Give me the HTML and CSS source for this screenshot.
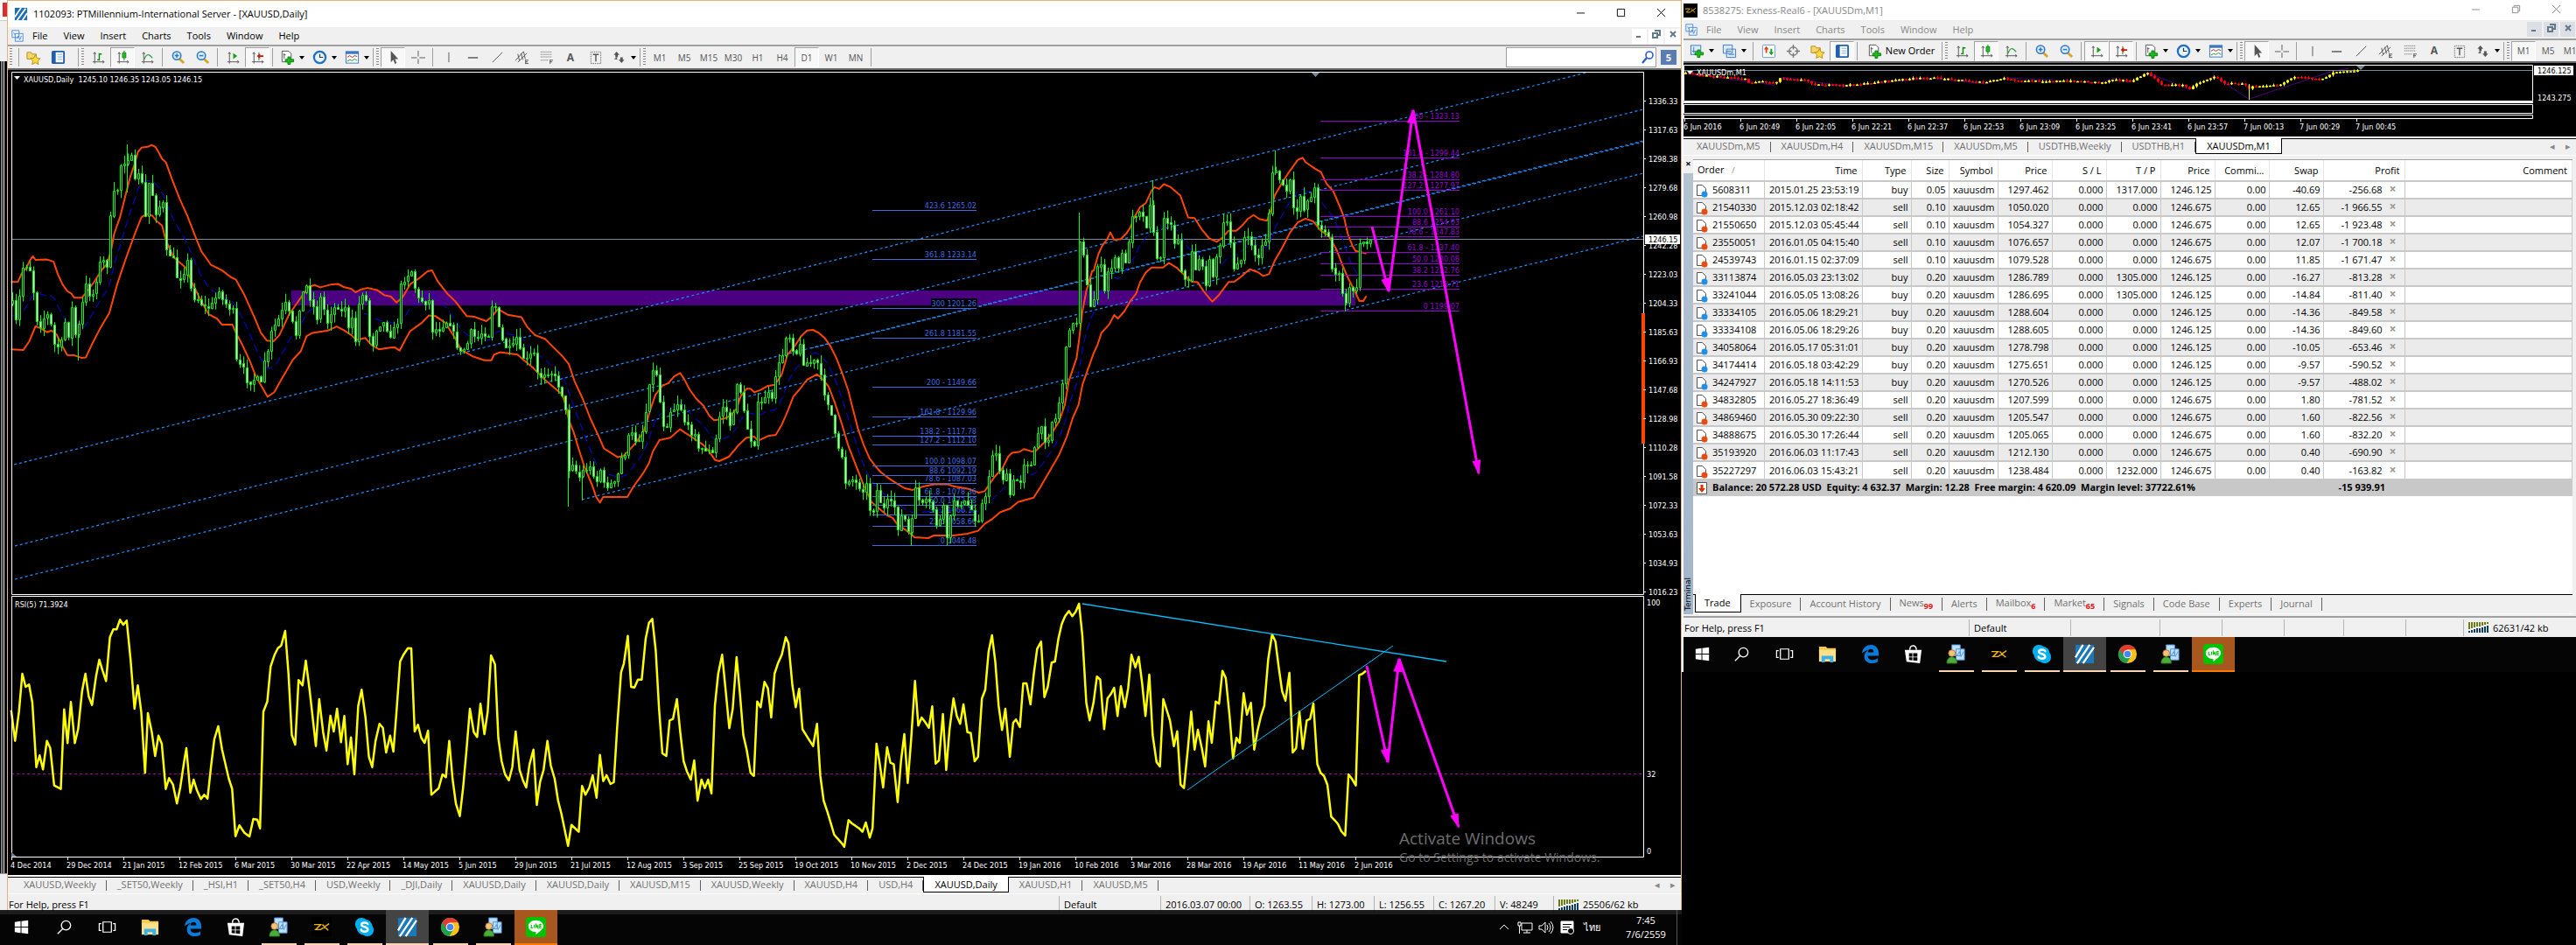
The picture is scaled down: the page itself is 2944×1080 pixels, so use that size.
FILE: index.html
```html
<!DOCTYPE html>
<html lang="en">
<head>
<meta charset="utf-8">
<title>MetaTrader workspace</title>
<link rel="stylesheet" href="styles.css">
</head>
<body>
<svg class="sprite" aria-hidden="true">
  <symbol id="i-app" viewBox="0 0 18 18"><path fill="#1d6fb0" d="M1 1h16v16H1z"/><path stroke="#fff" stroke-width="2" d="M1 13 9 1M4 17 15 2M11 17l6-9"/></symbol>
  <symbol id="i-doc" viewBox="0 0 18 18"><g fill="#eaf2fc" stroke="#4a86d0"><path d="M2 2h9v9H2zM6 6h10v10H6z"/><path fill="none" d="M8 13l2-4 2 5 2-5M4 5l2 3"/></g></symbol>
  <symbol id="i-star" viewBox="0 0 18 18"><path fill="#f5d76a" stroke="#b98d1b" d="M1 3h5l1 2h5v6H1z"/><path fill="#ffd83a" stroke="#b98d1b" d="m11 6 2 4 4 .5-3 3 .7 4L11 15.500l-4 2 1-4-3-3 4-.5z"/></symbol>
  <symbol id="i-nav" viewBox="0 0 18 18"><rect x="2" y="2" width="14" height="14" rx="1" fill="#fff" stroke="#1f5fae" stroke-width="2"/><path fill="#1f5fae" d="M2 2h4v14H2z"/><path stroke="#7da7dd" d="M8 5.500h6M8 8.500h6M8 11.500h6"/></symbol>
  <symbol id="i-bars" viewBox="0 0 18 18"><path fill="none" stroke="#555" d="M4.500 3v13.500M2 14.500h14M3 5l1.500-2L6 5M14 13l2 1.500-2 1.500"/><path stroke="#0a8a0a" stroke-width="1.500" d="M10 4v9M10 5h3M7.500 12H10"/></symbol>
  <symbol id="i-candle" viewBox="0 0 18 18"><path fill="none" stroke="#555" d="M4.500 3v13.500M2 14.500h14M3 5l1.500-2L6 5M14 13l2 1.500-2 1.500"/><path stroke="#0a8a0a" d="M10.500 1v12"/><path fill="#1fc41f" stroke="#0a8a0a" d="M8.500 3.500h4v6h-4z"/></symbol>
  <symbol id="i-line" viewBox="0 0 18 18"><path fill="none" stroke="#555" d="M4.500 3v13.500M2 14.500h14M3 5l1.500-2L6 5M14 13l2 1.500-2 1.500"/><path fill="none" stroke="#2f9a3a" stroke-width="1.300" d="M5 12c2-6 5-9 10-2"/></symbol>
  <symbol id="i-zin" viewBox="0 0 18 18"><path stroke="#d9a520" stroke-width="3" d="m11 11 5 5"/><circle cx="7.500" cy="7" r="5" fill="#d8ecff" stroke="#2f79c4" stroke-width="1.600"/><path stroke="#2f79c4" stroke-width="1.600" d="M5 7h5M7.500 4.500v5"/></symbol>
  <symbol id="i-zout" viewBox="0 0 18 18"><path stroke="#d9a520" stroke-width="3" d="m11 11 5 5"/><circle cx="7.500" cy="7" r="5" fill="#d8ecff" stroke="#2f79c4" stroke-width="1.600"/><path stroke="#2f79c4" stroke-width="1.600" d="M5 7h5"/></symbol>
  <symbol id="i-scroll" viewBox="0 0 18 18"><path fill="none" stroke="#555" d="M4.500 3v13.500M2 14.500h14M3 5l1.500-2L6 5M14 13l2 1.500-2 1.500"/><path fill="#18a018" d="m9 4 5 3.500L9 11z"/></symbol>
  <symbol id="i-shift" viewBox="0 0 18 18"><path fill="none" stroke="#555" d="M4.500 3v13.500M2 14.500h14M3 5l1.500-2L6 5M14 13l2 1.500-2 1.500M10.500 3v10"/><path fill="#c01c00" d="m8 7.500 4-3v2h4v2h-4v2z"/></symbol>
  <symbol id="i-ind" viewBox="0 0 18 18"><path fill="#fff" stroke="#555" d="M2.500 1.500h8l3 3v10h-11z"/><path stroke="#555" d="M5 11V4M4 6h3"/><path fill="#18c018" stroke="#0a800a" d="M9.500 8.500h3v3h4v3h-4v3h-3v-3h-3v-3h3z"/></symbol>
  <symbol id="i-clock" viewBox="0 0 18 18"><circle cx="9" cy="9" r="7" fill="#eaf4ff" stroke="#1f6fc8" stroke-width="2.400"/><path fill="none" stroke="#333" stroke-width="1.300" d="M9 5v4h4"/></symbol>
  <symbol id="i-tpl" viewBox="0 0 18 18"><rect x="1.500" y="2" width="15" height="14" fill="#fff" stroke="#3b78c0"/><path fill="#3b78c0" d="M1 2h16v3H1z"/><path fill="none" stroke="#a02020" d="m3 9 3-2 3 2 3-2 3 1"/><path fill="none" stroke="#209020" d="m3 14 3-2 3 1 3-2 3 2"/></symbol>
  <symbol id="i-cursor" viewBox="0 0 18 18"><path fill="#555" d="M6 1v14l3-3 2 5 2-1-2-5h4z"/></symbol>
  <symbol id="i-cross" viewBox="0 0 18 18"><path stroke="#555" d="M9.500 1v7M9.500 11v6M1 9.500h7M11 9.500h7"/></symbol>
  <symbol id="i-vl" viewBox="0 0 18 18"><path stroke="#555" d="M9.500 3v12"/></symbol>
  <symbol id="i-hl" viewBox="0 0 18 18"><path stroke="#555" stroke-width="1.500" d="M3 9.500h12"/></symbol>
  <symbol id="i-tl" viewBox="0 0 18 18"><path stroke="#555" d="M3 15 15 3"/></symbol>
  <symbol id="i-ch" viewBox="0 0 18 18"><path fill="none" stroke="#555" d="M1 13 11 2M4 15 15 4M4 5l2 8M8 4l2 8M11 2l2 9M13.500 12v5M13 12.500h4M13 14.500h3M13 16.500h4"/></symbol>
  <symbol id="i-fib" viewBox="0 0 18 18"><path stroke="#555" stroke-dasharray="1 1" d="M2 2.500h14M2 5.500h14M2 8.500h14M2 12.500h9"/><path fill="none" stroke="#555" d="M13.500 17v-5M13 12.500h4M13 14.500h3"/></symbol>
  <symbol id="i-lbl" viewBox="0 0 18 18"><path fill="none" stroke="#555" stroke-dasharray="1 1" d="M3.500 2.500h12v14h-12z"/><path stroke="#555" stroke-width="1.500" d="M6 5.500h7M9.500 6v8"/></symbol>
  <symbol id="i-arr" viewBox="0 0 18 18"><path fill="#555" d="m6 2 3.500 4H7.500v3h-3V6H2.500zM12 16 8.500 12h2V9h3v3h2zM3 11l3-2 1 3z"/></symbol>
  <symbol id="i-new" viewBox="0 0 18 18"><rect x="1.500" y="2" width="12" height="11" fill="#dcebfb" stroke="#3b78c0"/><path stroke="#3b78c0" d="M5 4v7M3 9h9"/><path fill="#18c018" stroke="#0a800a" d="M9.500 7.500h3v3h4v3h-4v3h-3v-3h-3v-3h3z"/></symbol>
  <symbol id="i-prof" viewBox="0 0 18 18"><path fill="#dcebfb" stroke="#3b78c0" d="M1.500 1.500h11v10h-11zM5.500 6.500h11v10h-11z"/><path stroke="#3b78c0" d="M5 9h6M8 13h7"/></symbol>
  <symbol id="i-mw" viewBox="0 0 18 18"><rect x="1.500" y="1.500" width="15" height="15" rx="1" fill="#fff" stroke="#6b9bd0"/><path fill="#18a018" d="m12 14-3-4h2V6h2v4h2z"/><path fill="#e04010" d="m6 3 3 4H7v4H5V7H3z"/></symbol>
  <symbol id="i-tgt" viewBox="0 0 18 18"><circle cx="9" cy="9" r="5" fill="none" stroke="#777" stroke-width="1.500"/><path stroke="#777" stroke-width="1.500" d="M9 1v6M9 11v6M1 9h6M11 9h6"/></symbol>
  <symbol id="i-conn" viewBox="0 0 24 12"><path fill="#6b7d14" d="M0 0h2v8H0zM3 0h2v7H3zM6 0h2v6H6zM9 0h2v5H9zM12 0h2v5h-2zM15 0h2v4h-2zM18 0h2v3h-2zM21 0h2v2h-2z"/><path fill="#0f3d5e" d="M0 10h2v2H0zM3 9h2v3H3zM6 8h2v4H6zM9 7h2v5H9zM12 7h2v5h-2zM15 6h2v6h-2zM18 5h2v7h-2zM21 4h2v8h-2z"/></symbol>
  <symbol id="i-mag" viewBox="0 0 18 18"><circle cx="11" cy="6" r="4" fill="none" stroke="#2a5fc0" stroke-width="1.600"/><path stroke="#2a5fc0" stroke-width="2.200" d="m8 9-5 6"/></symbol>
  <symbol id="t-win" viewBox="0 0 24 24"><path fill="#fff" d="M4 6l7-1v6.500H4zM12 5l8-1v7.500h-8zM4 12.500h7V19l-7-1zM12 12.500h8V20l-8-1z"/></symbol>
  <symbol id="t-find" viewBox="0 0 24 24"><circle cx="14" cy="10" r="5.500" fill="none" stroke="#fff" stroke-width="1.400"/><path stroke="#fff" stroke-width="1.400" d="m10 14-6 6"/></symbol>
  <symbol id="t-task" viewBox="0 0 24 24"><path fill="none" stroke="#fff" stroke-width="1.300" d="M7 6h10v12H7zM5 8H2.500v8H5M19 8h2.500v8H19"/></symbol>
  <symbol id="t-dir" viewBox="0 0 24 24"><path fill="#f6c944" d="M2 3h8l2 2h10v4H2z"/><path fill="#fde18a" d="M2 7h20v14H2z"/><path fill="#3ab0ec" d="M5 14h14v8h-4v-4H9v4H5z"/></symbol>
  <symbol id="t-edge" viewBox="0 0 24 24"><path fill="#0b7ad8" d="M2 11C3 4 8 1 13 1c6 0 9 5 9 10v3H9c0 4 3 5 6 5 2 0 4-.5 6-2v4c-2 1.500-5 2-7 2-6 0-10-4-9-10 .6-3 3-5 5-6-3 .5-6 2-8 4zm7-1h7c0-3-1.500-4-3.500-4S9.500 7.500 9 10z"/></symbol>
  <symbol id="t-store" viewBox="0 0 24 24"><path fill="none" stroke="#fff" stroke-width="1.500" d="M8 7c0-6 7-7 8 0"/><path fill="#fff" d="M2 7h20l-2 16-16-2z"/><path fill="#000" d="M7 11h4v4H7zM12 11h5v4h-5zM7 16h4v3.500l-4-.5zM12 16h5v4l-5-.5z"/></symbol>
  <symbol id="t-mt" viewBox="0 0 24 24"><path fill="#bfe0fb" stroke="#4a90d8" d="M7 1h10v13H7zM12 6h10v13H12z"/><path fill="none" stroke="#4a90d8" d="M13 14l3-5 2 6 3-6"/><circle cx="7" cy="11" r="4" fill="#f3c27a" stroke="#b9702a"/><path fill="#4cae3a" stroke="#2c7a1d" d="M1 23c0-10 12-10 12 0z"/></symbol>
  <symbol id="t-zx" viewBox="0 0 24 24"><path fill="#000" d="M0 0h24v24H0z"/><path fill="none" stroke="#f0b400" stroke-width="1.500" d="M3 9h8l-6 6h6L21 8M13 9l7 7"/></symbol>
  <symbol id="t-skype" viewBox="0 0 24 24"><rect x="1" y="1" width="15" height="15" rx="7" fill="#00aff0"/><rect x="8" y="8" width="15" height="15" rx="7" fill="#00aff0"/><circle cx="12" cy="12" r="9.500" fill="#00aff0"/><path fill="none" stroke="#fff" stroke-width="2.600" stroke-linecap="round" d="M16 8.500C15 6 8.500 6 8.500 9c0 3.500 7.500 2 7.500 6 0 3.500-7.500 3-8 0"/></symbol>
  <symbol id="t-app" viewBox="0 0 24 24"><path fill="#1d78b8" d="M1 1h22v22H1z"/><path stroke="#fff" stroke-width="2.400" d="M1 16 10 1M3 23 18 1M10 23 23 4"/></symbol>
  <symbol id="t-chrome" viewBox="0 0 24 24"><circle cx="12" cy="12" r="11" fill="#fbc116"/><path fill="#e33b2e" d="M2.500 6.500A11 11 0 0 1 21.500 6.500H12L7 15z"/><path fill="#1da050" d="M2.500 6.500A11 11 0 0 0 11 23l5-8.500H8z"/><circle cx="12" cy="12" r="5" fill="#fff"/><circle cx="12" cy="12" r="4" fill="#4688f1"/></symbol>
  <symbol id="t-line" viewBox="0 0 24 24"><rect width="24" height="24" rx="4" fill="#00c300"/><path fill="#fff" d="M12 4c5 0 9 3 9 7 0 3-4 6-9 10v-3c-5 0-9-3-9-7s4-7 9-7z"/><path fill="none" stroke="#00c300" stroke-width="1.200" d="M6.500 9v4h2M10 9v4M12 13V9l2.500 4V9M18.500 9h-2v4h2M16.500 11h2"/></symbol>
</svg>

<main class="screens">
<section class="screen">
  <div class="behind"><i class="b-red"></i><i class="b-tool"></i><i class="b-chart"></i><i class="b-foot"></i></div>
  <div class="window first">
    <header class="title">
      <svg class="ic"><use href="#i-app"/></svg><h1>1102093: PTMillennium-International Server - [XAUUSD,Daily]</h1>
      <span class="caps"><button aria-label="Minimize"><svg viewBox="0 0 12 12"><path d="M1 6.500h10"/></svg></button><button aria-label="Maximize"><svg viewBox="0 0 12 12"><path d="M1.500 1.500h9v9h-9z"/></svg></button><button aria-label="Close"><svg viewBox="0 0 12 12"><path d="m1 1 10 10M11 1 1 11"/></svg></button></span>
    </header>
    <nav class="menu"><svg class="ic"><use href="#i-doc"/></svg><button>File</button><button>View</button><button>Insert</button><button>Charts</button><button>Tools</button><button>Window</button><button>Help</button>
      <span class="mdi"><button aria-label="Minimize chart"><svg viewBox="0 0 12 12"><path d="M2 9h5"/></svg></button><button aria-label="Restore chart"><svg viewBox="0 0 12 12"><path d="M4 2h6v5H8M2 5h5v5H2z"/></svg></button><button aria-label="Close chart"><svg viewBox="0 0 12 12"><path d="m3 3 6 6M9 3 3 9"/></svg></button></span></nav>
    <div class="tools">
      <i class="gsep"></i>
      <button class="b" aria-label="Favorites"><svg><use href="#i-star"/></svg></button><button class="b" aria-label="Navigator"><svg><use href="#i-nav"/></svg></button>
      <i class="gsep wide"></i>
      <button class="b" aria-label="Bars"><svg><use href="#i-bars"/></svg></button><button class="b on" aria-label="Candles"><svg><use href="#i-candle"/></svg></button><button class="b" aria-label="Line"><svg><use href="#i-line"/></svg></button>
      <i class="sep"></i>
      <button class="b" aria-label="Zoom in"><svg><use href="#i-zin"/></svg></button><button class="b" aria-label="Zoom out"><svg><use href="#i-zout"/></svg></button>
      <i class="sep"></i>
      <button class="b" aria-label="Auto scroll"><svg><use href="#i-scroll"/></svg></button><button class="b on" aria-label="Chart shift"><svg><use href="#i-shift"/></svg></button>
      <i class="sep"></i>
      <button class="b drop" aria-label="Indicators"><svg><use href="#i-ind"/></svg></button><button class="b drop" aria-label="Periods"><svg><use href="#i-clock"/></svg></button><button class="b drop" aria-label="Templates"><svg><use href="#i-tpl"/></svg></button>
      <i class="gsep"></i>
      <button class="b on" aria-label="Cursor"><svg><use href="#i-cursor"/></svg></button><button class="b" aria-label="Crosshair"><svg><use href="#i-cross"/></svg></button>
      <i class="sep"></i>
      <button class="b" aria-label="Vertical line"><svg><use href="#i-vl"/></svg></button><button class="b" aria-label="Horizontal line"><svg><use href="#i-hl"/></svg></button><button class="b" aria-label="Trendline"><svg><use href="#i-tl"/></svg></button><button class="b" aria-label="Channel"><svg><use href="#i-ch"/></svg></button><button class="b" aria-label="Fibonacci"><svg><use href="#i-fib"/></svg></button><button class="b big">A</button><button class="b" aria-label="Text label"><svg><use href="#i-lbl"/></svg></button><button class="b drop" aria-label="Arrows"><svg><use href="#i-arr"/></svg></button>
      <i class="gsep"></i>
      <button class="b">M1</button><button class="b">M5</button><button class="b">M15</button><button class="b">M30</button><button class="b">H1</button><button class="b">H4</button><button class="b on">D1</button><button class="b">W1</button><button class="b">MN</button>
      <i class="sep"></i>
      <label class="search"><input type="text" aria-label="Search"><svg><use href="#i-mag"/></svg></label><button class="chat">5</button>
    </div>
    <svg id="daily" class="chart" viewBox="9 80 1912 920" role="img" aria-label="XAUUSD daily chart with RSI"></svg>
    <nav class="tabs"><button>XAUUSD,Weekly</button><button>_SET50,Weekly</button><button>_HSI,H1</button><button>_SET50,H4</button><button>USD,Weekly</button><button>_DJI,Daily</button><button>XAUUSD,Daily</button><button>XAUUSD,Daily</button><button>XAUUSD,M15</button><button>XAUUSD,Weekly</button><button>XAUUSD,H4</button><button>USD,H4</button><button class="cur">XAUUSD,Daily</button><button>XAUUSD,H1</button><button>XAUUSD,M5</button><span class="arrows"><button aria-label="Previous">◂</button><button aria-label="Next">▸</button></span></nav>
    <footer class="status s1"><span>For Help, press F1</span><span>Default</span><span>2016.03.07 00:00</span><span>O: 1263.55</span><span>H: 1273.00</span><span>L: 1256.55</span><span>C: 1267.20</span><span>V: 48249</span><span><svg class="conn"><use href="#i-conn"/></svg>25506/62 kb</span></footer>
  </div>
  <nav class="taskbar">
    <button aria-label="Start"><svg><use href="#t-win"/></svg></button><button aria-label="Search Windows"><svg><use href="#t-find"/></svg></button><button aria-label="Task view"><svg><use href="#t-task"/></svg></button><button aria-label="Explorer"><svg><use href="#t-dir"/></svg></button><button aria-label="Edge"><svg><use href="#t-edge"/></svg></button><button aria-label="Store"><svg><use href="#t-store"/></svg></button><button class="run" aria-label="MetaTrader"><svg><use href="#t-mt"/></svg></button><button class="run" aria-label="Exness"><svg><use href="#t-zx"/></svg></button><button class="run" aria-label="Skype"><svg><use href="#t-skype"/></svg></button><button class="run act" aria-label="PTMillennium"><svg><use href="#t-app"/></svg></button><button class="run" aria-label="Chrome"><svg><use href="#t-chrome"/></svg></button><button class="run" aria-label="MetaTrader 2"><svg><use href="#t-mt"/></svg></button><button class="alert" aria-label="LINE"><svg><use href="#t-line"/></svg></button>
    <div class="tray">
      <svg viewBox="0 0 18 18"><path d="m4 11 5-5 5 5"/></svg>
      <svg viewBox="0 0 18 18"><path d="M5 4h12v8H5zM1 3h3v4H1zM2.500 7v9M7 15h8M11 12v3"/></svg>
      <svg viewBox="0 0 18 18"><path d="M1 7h3l4-4v12l-4-4H1zM10 6q2 3 0 6M12 4q4 5 0 10M14 2q6 7 0 14"/></svg>
      <svg viewBox="0 0 18 18"><path fill="#fff" d="M2 2h14v11h-3v2H2z"/><path stroke="#000" d="M4 5.500h10M4 8.500h8M4 11.500h5"/><circle cx="13" cy="13" r="3.500" fill="#000"/></svg>
      <span class="lang">ไทย</span>
      <time><b>7:45</b><b>7/6/2559</b></time>
    </div>
  </nav>
</section>

<section class="screen second">
  <div class="window idle">
    <header class="title">
      <svg class="ic"><use href="#t-zx"/></svg><h1>8538275: Exness-Real6 - [XAUUSDm,M1]</h1>
      <span class="caps"><button aria-label="Minimize"><svg viewBox="0 0 12 12"><path d="M1 6.500h10"/></svg></button><button aria-label="Restore"><svg viewBox="0 0 12 12"><path d="M3.500 3V1.500h7v7H9M1.500 3.500h7v7h-7z"/></svg></button><button aria-label="Close"><svg viewBox="0 0 12 12"><path d="m1 1 10 10M11 1 1 11"/></svg></button></span>
    </header>
    <nav class="menu"><svg class="ic"><use href="#i-doc"/></svg><button>File</button><button>View</button><button>Insert</button><button>Charts</button><button>Tools</button><button>Window</button><button>Help</button>
      <span class="mdi"><button aria-label="Minimize chart"><svg viewBox="0 0 12 12"><path d="M2 9h5"/></svg></button><button aria-label="Restore chart"><svg viewBox="0 0 12 12"><path d="M4 2h6v5H8M2 5h5v5H2z"/></svg></button><button aria-label="Close chart"><svg viewBox="0 0 12 12"><path d="m3 3 6 6M9 3 3 9"/></svg></button></span></nav>
    <div class="tools">
      <button class="b drop" aria-label="New chart"><svg><use href="#i-new"/></svg></button><button class="b drop" aria-label="Profiles"><svg><use href="#i-prof"/></svg></button>
      <i class="sep"></i>
      <button class="b" aria-label="Market watch"><svg><use href="#i-mw"/></svg></button><button class="b" aria-label="Data window"><svg><use href="#i-tgt"/></svg></button><button class="b" aria-label="Navigator"><svg><use href="#i-star"/></svg></button><button class="b on" aria-label="Terminal"><svg><use href="#i-nav"/></svg></button>
      <i class="sep"></i>
      <button class="b order"><svg><use href="#i-ind"/></svg>New Order</button>
      <i class="gsep"></i>
      <button class="b" aria-label="Bars"><svg><use href="#i-bars"/></svg></button><button class="b on" aria-label="Candles"><svg><use href="#i-candle"/></svg></button><button class="b" aria-label="Line"><svg><use href="#i-line"/></svg></button>
      <i class="sep"></i>
      <button class="b" aria-label="Zoom in"><svg><use href="#i-zin"/></svg></button><button class="b" aria-label="Zoom out"><svg><use href="#i-zout"/></svg></button>
      <i class="sep"></i>
      <button class="b on" aria-label="Auto scroll"><svg><use href="#i-scroll"/></svg></button><button class="b on" aria-label="Chart shift"><svg><use href="#i-shift"/></svg></button>
      <i class="sep"></i>
      <button class="b drop" aria-label="Indicators"><svg><use href="#i-ind"/></svg></button><button class="b drop" aria-label="Periods"><svg><use href="#i-clock"/></svg></button><button class="b drop" aria-label="Templates"><svg><use href="#i-tpl"/></svg></button>
      <i class="gsep"></i>
      <button class="b on" aria-label="Cursor"><svg><use href="#i-cursor"/></svg></button><button class="b" aria-label="Crosshair"><svg><use href="#i-cross"/></svg></button>
      <i class="sep"></i>
      <button class="b" aria-label="Vertical line"><svg><use href="#i-vl"/></svg></button><button class="b" aria-label="Horizontal line"><svg><use href="#i-hl"/></svg></button><button class="b" aria-label="Trendline"><svg><use href="#i-tl"/></svg></button><button class="b" aria-label="Channel"><svg><use href="#i-ch"/></svg></button><button class="b" aria-label="Fibonacci"><svg><use href="#i-fib"/></svg></button><button class="b big">A</button><button class="b" aria-label="Text label"><svg><use href="#i-lbl"/></svg></button><button class="b drop" aria-label="Arrows"><svg><use href="#i-arr"/></svg></button>
      <i class="gsep"></i>
      <button class="b on">M1</button><button class="b">M5</button><button class="b">M15</button>
    </div>
    <svg id="minute" class="chart" viewBox="1924 72 1020 84" role="img" aria-label="XAUUSDm one-minute chart"></svg>
    <nav class="tabs"><button>XAUUSDm,M5</button><button>XAUUSDm,H4</button><button>XAUUSDm,M15</button><button>XAUUSDm,M5</button><button>USDTHB,Weekly</button><button>USDTHB,H1</button><button class="cur">XAUUSDm,M1</button><span class="arrows"><button aria-label="Previous">◂</button><button aria-label="Next">▸</button></span></nav>
    <section class="terminal">
      <div class="side"><button aria-label="Close terminal">×</button><span>Terminal</span></div>
      <div class="pane">
        <table>
          <colgroup><col class="w-order"><col class="w-time"><col class="w-type"><col class="w-size"><col class="w-type"><col class="w-num"><col class="w-num"><col class="w-num"><col class="w-num"><col class="w-num"><col class="w-num"><col class="w-profit"><col></colgroup>
          <thead><tr><th>Order <small>/</small></th><th>Time</th><th>Type</th><th>Size</th><th>Symbol</th><th>Price</th><th>S / L</th><th>T / P</th><th>Price</th><th>Commi...</th><th>Swap</th><th>Profit</th><th>Comment</th></tr></thead>
          <tbody id="orders"></tbody>
          <tfoot><tr><td colspan="11"><svg viewBox="0 0 14 16"><path fill="#fff" stroke="#555" d="M1.500 1.500h11v13h-11z"/><path fill="#e03000" d="m7 13-4-5h2.500V4h3v4H11z"/></svg>Balance: 20 572.28 USD&nbsp; Equity: 4 632.37&nbsp; Margin: 12.28&nbsp; Free margin: 4 620.09&nbsp; Margin level: 37722.61%</td><td class="total">-15 939.91</td><td></td></tr></tfoot>
        </table>
        <nav class="tabs lower"><button class="cur">Trade</button><button>Exposure</button><button>Account History</button><button>News<sub>99</sub></button><button>Alerts</button><button>Mailbox<sub>6</sub></button><button>Market<sub>65</sub></button><button>Signals</button><button>Code Base</button><button>Experts</button><button>Journal</button></nav>
      </div>
    </section>
    <footer class="status s2"><span>For Help, press F1</span><span>Default</span><span></span><span></span><span></span><span></span><span></span><span></span><span><svg class="conn"><use href="#i-conn"/></svg>62631/42 kb</span></footer>
  </div>
  <nav class="taskbar">
    <button aria-label="Start"><svg><use href="#t-win"/></svg></button><button aria-label="Search Windows"><svg><use href="#t-find"/></svg></button><button aria-label="Task view"><svg><use href="#t-task"/></svg></button><button aria-label="Explorer"><svg><use href="#t-dir"/></svg></button><button aria-label="Edge"><svg><use href="#t-edge"/></svg></button><button aria-label="Store"><svg><use href="#t-store"/></svg></button><button class="run" aria-label="MetaTrader"><svg><use href="#t-mt"/></svg></button><button class="run" aria-label="Exness"><svg><use href="#t-zx"/></svg></button><button class="run" aria-label="Skype"><svg><use href="#t-skype"/></svg></button><button class="run act" aria-label="PTMillennium"><svg><use href="#t-app"/></svg></button><button class="run" aria-label="Chrome"><svg><use href="#t-chrome"/></svg></button><button class="run" aria-label="MetaTrader 2"><svg><use href="#t-mt"/></svg></button><button class="alert" aria-label="LINE"><svg><use href="#t-line"/></svg></button>
  </nav>
</section>
</main>
<script src="charts.js"></script>
</body>
</html>
```

FILE: styles.css
```css
* { box-sizing: border-box; }
body { margin: 0; background: #000; font: 11px/16px "Open Sans", "Noto Sans", sans-serif; color: #000; }
button, input { font: inherit; color: inherit; border: 0; background: none; padding: 0; margin: 0; }
.sprite { position: absolute; width: 0; height: 0; }

.screens { display: grid; grid-template-columns: 1922fr 1022fr; align-items: start; }
.screen { display: grid; grid-template-columns: 8px minmax(0, 1fr); position: relative; }
.screen.second { grid-template-columns: minmax(0, 1fr); border-left: 2px solid #fff; }

/* edge of the window lying underneath */
.behind { display: flex; flex-direction: column; background: #fff; }
.behind i { display: block; }
.b-red { height: 16px; margin: 3px 0 4px 3px; background: #e02a30; }
.b-tool { height: 47px; background: #f0f0f0; border-top: 1px solid #ccc; }
.b-chart { flex: 1; background: linear-gradient(90deg, #000 1px, #808080 1px, #808080 3px, #000 3px, #000 4px, #fff 4px, #fff 5px, #000 5px); }
.b-foot { height: 47px; background: #f0f0f0; border-top: 1px solid #a0a0a0; }

.window { background: #f0f0f0; min-width: 0; }
.first { border: 1px solid #e8b37a; border-bottom: 0; }

.title { height: 30px; background: #fff; display: flex; align-items: center; padding-left: 7px; gap: 6px; }
.title h1 { margin: 0; flex: 1; font-size: 11px; font-weight: 400; }
.ic { width: 16px; height: 16px; }
.caps { display: flex; }
.caps button { width: 46px; height: 22px; }
.caps svg { width: 11px; height: 11px; fill: none; stroke: currentColor; }
.menu { height: 20px; display: flex; align-items: center; padding-left: 3px; }
.menu > button { padding: 0 9px; }
.mdi { margin-left: auto; display: flex; gap: 2px; padding-right: 1px; }
.mdi button { width: 17px; height: 17px; background: #fff; }
.mdi svg { width: 12px; height: 12px; fill: none; stroke: #64788c; stroke-width: 2; }

.idle .title { height: 23px; padding-left: 0; color: #888; }
.idle .menu { height: 21px; padding-left: 1px; color: #888; }
.idle .menu > button { padding: 0 9px; }
.idle .mdi button { background: #dcdfe4; }

.tools { height: 29px; border-top: 2px solid #a0a0a0; border-bottom: 2px solid #696969; display: flex; align-items: center; color: #555; overflow: hidden; }
.idle .tools { height: 28px; padding-left: 2px; }
.b { flex: none; width: 28px; height: 23px; display: flex; align-items: center; justify-content: center; font-size: 10px; border: 1px solid transparent; }
.b svg { flex: none; width: 17px; height: 17px; }
.b.big { font-size: 12px; font-weight: 700; }
.b.on { background: #f8f8f8; border-color: #a0a0a0 #fff #fff #a0a0a0; }
.drop { width: 37px; gap: 5px; }
.drop::after { content: ""; border: 3px solid transparent; border-top: 4px solid #000; border-bottom: 0; }
.order { width: 93px; color: #000; font-size: 11px; gap: 4px; }
.sep { flex: none; width: 1px; height: 21px; margin: 0 3px; background: #a0a0a0; }
.gsep { flex: none; width: 9px; height: 21px; border-left: 1px solid #a0a0a0; background: repeating-linear-gradient(#888 0 1px, transparent 1px 3px) 3px 0 / 3px 100% no-repeat; }
.gsep:first-child { width: 12px; margin-left: 1px; border: 0; border-right: 1px solid #a0a0a0; background-position: 1px 0; margin-right: 2px; }
.gsep.wide { margin-left: 9px; }
.search { margin-left: auto; width: 172px; height: 23px; border: 1px solid #a0a0a0; background: #fff; display: flex; align-items: center; }
.search input { flex: 1; min-width: 0; height: 20px; }
.search svg { width: 18px; height: 18px; }
.chat { width: 18px; height: 17px; margin: 0 5px; background: #5b7cb0; color: #fff; font-weight: 700; }

.chart { display: block; width: 100%; height: auto; background: #000; }
.chart text { font: 9px "DejaVu Sans Condensed", "DejaVu Sans", sans-serif; fill: #fff; }
.chart .fibb { fill: #4169e1; }
.chart .fibp { fill: #9400d3; }
.chart .inv { fill: #000; }
.chart .wm { font: 14px "Open Sans", sans-serif; fill: #6e6e6e; }
.chart .wm.l { font-size: 19px; }

.tabs { height: 22px; display: flex; align-items: stretch; border-top: 2px solid #fff; color: #707070; padding-left: 6px; padding-bottom: 2px; box-shadow: inset 0 1px #000, inset 0 -1px #fff; }
.tabs > button { padding: 0 12px; position: relative; font-size: 11px; }
.tabs > button::after { content: ""; position: absolute; right: 0; top: 4px; bottom: 2px; border-right: 1px solid #606060; }
.tabs > .cur { background: #fff; color: #000; border: 1px solid #000; border-top: 0; }
.tabs > .cur::after { display: none; }
.arrows { margin-left: auto; display: flex; gap: 12px; padding-right: 6px; color: #888; }
.idle .tabs { padding-left: 3px; }
.idle .tabs > button { padding: 0 12px; }

.status { height: 23px; display: grid; align-items: center; line-height: 19px; }
.status span { border-left: 1px solid #b4b4b4; padding-left: 5px; height: 19px; white-space: nowrap; display: flex; align-items: center; gap: 4px; }
.status span:first-child { border: 0; padding-left: 1px; }
.s1 { grid-template-columns: minmax(0, 1fr) 116px 102px 71px 71px 68px 70px 67px 146px; }
.s2 { grid-template-columns: minmax(0, 1fr) 116px 102px 71px 71px 68px 71px 66px 129px; height: 24px; border-top: 2px solid #a0a0a0; }
.conn { flex: none; width: 24px; height: 12px; }

.terminal { display: flex; padding: 4px 4px 2px 0; }
.side { width: 11px; display: flex; flex-direction: column; justify-content: space-between; background: linear-gradient(#f0f0f0 16px, #b4c3d2 16px, #a3b6ca); }
.side button { height: 10px; line-height: 10px; font-weight: 700; }
.side span { writing-mode: vertical-rl; transform: rotate(180deg); font: 9px/11px "DejaVu Sans", sans-serif; padding-top: 4px; width: 11px; }
.pane { flex: 1; min-width: 0; min-height: 520px; background: #fff; border-top: 1px solid #a0a0a0; display: flex; flex-direction: column; }
table { width: 100%; table-layout: fixed; border-collapse: collapse; }
.w-order { width: 81px; } .w-time { width: 112px; } .w-type { width: 56px; } .w-size { width: 43px; } .w-num { width: 62px; } .w-profit { width: 93px; }
th { height: 24px; font-weight: 400; text-align: right; padding: 0 5px; border-right: 1px solid #e4e4e4; white-space: nowrap; }
th:first-child { text-align: left; }
th small { padding-left: 6px; color: #888; }
td { height: 20px; padding: 0 3px; text-align: right; white-space: nowrap; border-right: 1px solid #c8c8c8; border-top: 2px solid #c8c8c8; }
tbody td:first-child { text-align: left; }
tbody tr:nth-child(even) { background: #ebebeb; }
td svg { width: 14px; height: 16px; vertical-align: -4px; margin: -1px 5px -1px 0; }
td button { width: 12px; margin: 0 4px 0 6px; color: #999; font-size: 14px; line-height: 14px; font-weight: 700; }
tfoot td { background: #c8c8c8; font-weight: 700; text-align: left; border: 0; }
tfoot .total { text-align: right; padding-right: 22px; }
.idle .lower { margin-top: auto; background: #f0f0f0; height: 23px; border-top: 0; padding-left: 2px; }
.idle .lower > button { padding: 0 11px 0 10px; }
.tabs sub { color: #e81010; font-weight: 700; font-size: 9px; line-height: 9px; }

.taskbar { grid-column: 1 / -1; position: relative; margin-top: -5px; height: 40px; background: rgba(6, 6, 6, 0.9); display: flex; }
.second .taskbar { margin-top: 0; }
.taskbar > button { width: 49px; display: flex; align-items: center; justify-content: center; border-bottom: 2px solid transparent; }
.second .taskbar > button:first-child { width: 42px; }
.taskbar > button svg { width: 23px; height: 23px; }
.taskbar > .run { background: linear-gradient(#fcd5b0, #fcd5b0) center bottom / 40px 2px no-repeat border-box; }
.taskbar > .act { background: #444; border-bottom-color: #fcd5b0; }
.taskbar > .alert { background: #a8581f; border-bottom-color: #ff7a00; }
.tray { margin-left: auto; display: flex; align-items: center; gap: 6px; color: #fff; border-right: 1px solid #555; margin-right: 5px; }
.tray svg { width: 18px; height: 18px; fill: none; stroke: #fff; stroke-width: 1; }
.lang { margin: 0 8px 0 4px; width: 22px; }
time { width: 70px; text-align: center; }
time b { display: block; font-weight: 400; }
```

FILE: charts.js
```js
(function () {
  var NS = 'http://www.w3.org/2000/svg';
  function el(svg, name, attrs, text) {
    var n = document.createElementNS(NS, name);
    for (var k in attrs) n.setAttribute(k, attrs[k]);
    if (text !== undefined) n.textContent = text;
    svg.appendChild(n);
    return n;
  }
  // Series are stored per block: origin, units per pixel, then "x,y" pairs.
  function series(blocks) {
    var out = [];
    blocks.forEach(function (b) {
      b[4].trim().split(/\s+/).forEach(function (p) {
        var q = p.split(',');
        out.push([b[0] + q[0] / b[2], b[1] + q[1] / b[3]]);
      });
    });
    return out.sort(function (a, b) { return a[0] - b[0]; });
  }
  function at(s, x) {
    for (var i = 1; i < s.length; i++) {
      if (x <= s[i][0]) {
        var a = s[i - 1], b = s[i];
        return a[1] + (b[1] - a[1]) * (x - a[0]) / ((b[0] - a[0]) || 1);
      }
    }
    return s[s.length - 1][1];
  }
  function d(s) { return 'M' + s.map(function (p) { return p[0].toFixed(1) + ' ' + p[1].toFixed(1); }).join('L'); }
  var seed = 7;
  function rnd() { seed = (seed * 16807) % 2147483647; return seed / 2147483647; }

  var A = [0, 80, 2.24, 2.613], B = [650, 80, 2.24, 2.613], C = [1250, 80, 2.2725, 2.613];
  var upper = series([
    A.concat('28,633 46,632 57,605 68,590 75,572 84,556 91,567 120,566 137,572 148,610 160,640 172,660 183,668 190,680 210,680 220,665 240,635 260,598 275,577 285,535 292,490 307,440 320,380 333,320 345,280 353,245 362,232 380,229 388,224 398,230 406,245 415,266 425,276 440,325 460,385 480,437 500,497 515,540 540,582 568,598 590,618 604,626 625,670 650,735 668,785 683,808 700,810 715,792 740,730 755,705 775,672 790,648 805,642 820,649 850,640 865,639 880,648 900,654 910,664 925,655 940,651 965,657 985,673 1000,676 1015,694 1030,680 1050,640 1075,620 1095,601 1106,598 1120,630 1145,668 1165,690 1195,735 1215,737 1245,750 1258,738 1275,714 1300,731 1335,738 1350,768 1370,792 1395,803 1420,832 1440,855 1454,875'),
    B.concat('0,878 15,930 35,980 55,1040 75,1090 90,1130 110,1145 125,1156 140,1152 155,1135 170,1115 190,1085 200,1050 210,1010 222,970 240,943 255,935 270,915 285,905 295,922 310,955 325,980 345,1003 360,1033 372,1046 385,1044 400,1040 415,1032 430,1010 440,975 455,952 465,952 475,962 490,956 510,943 528,940 545,910 560,850 580,822 595,795 610,778 625,776 640,785 655,800 670,825 685,860 700,905 715,955 728,1015 740,1070 755,1120 770,1160 785,1183 800,1202 820,1220 840,1235 860,1249 880,1254 895,1248 910,1243 935,1237 970,1237 985,1243 1020,1250 1050,1262 1065,1258 1075,1240 1090,1215 1110,1190 1125,1155 1135,1143 1155,1140 1165,1132 1185,1139 1195,1138 1215,1115 1235,1088 1255,1050 1270,1000 1280,930 1300,860 1307,800 1315,720 1325,660 1340,600'),
    C.concat('0,600 12,550 22,525 35,505 43,485 53,507 70,505 85,488 95,470 105,440 120,410 135,398 150,360 158,350 170,355 182,341 200,350 225,375 245,440 262,442 280,475 300,503 320,513 335,500 350,480 370,480 385,465 400,445 415,433 430,445 450,450 460,420 470,375 490,335 510,300 530,268 543,262 550,275 575,295 590,305 605,340 622,362 640,410 650,440 660,490 672,525 680,540 708,548')
  ]);
  var lower = series([
    A.concat('28,834 60,836 75,810 91,765 105,772 120,783 132,778 145,790 160,825 172,851 190,852 210,860 220,858 235,820 255,775 280,725 300,640 320,570 345,490 362,440 375,430 390,435 400,450 415,465 425,510 445,560 475,590 490,630 515,690 535,730 555,742 568,760 595,760 604,785 620,820 640,870 655,915 670,945 685,976 702,962 720,925 735,895 750,865 770,840 785,795 800,785 840,778 862,766 880,777 900,792 912,806 935,800 950,820 970,834 1000,829 1010,828 1023,838 1040,800 1050,780 1080,755 1098,733 1115,735 1140,755 1165,800 1180,835 1210,855 1240,867 1258,867 1265,850 1280,843 1325,850 1345,870 1365,890 1395,925 1425,955 1440,970 1450,1010'),
    B.concat('0,1045 12,1080 25,1130 40,1185 60,1240 70,1275 80,1292 88,1275 150,1275 165,1245 190,1205 205,1175 215,1140 232,1105 260,1098 285,1073 300,1085 320,1100 345,1120 360,1140 375,1165 385,1168 410,1155 435,1120 455,1098 475,1095 485,1107 510,1093 530,1090 545,1060 560,1020 575,975 590,955 610,925 635,909 645,917 665,945 680,990 700,1060 715,1120 735,1180 755,1240 775,1290 800,1315 815,1330 830,1338 840,1355 870,1380 885,1395 920,1398 935,1390 950,1390 985,1390 1020,1385 1048,1376 1065,1355 1085,1340 1105,1320 1130,1310 1150,1290 1190,1277 1205,1250 1235,1190 1255,1150 1275,1095 1290,1040 1305,1000 1315,940 1330,890'),
    C.concat('0,845 10,820 20,785 40,760 53,732 63,742 80,720 95,690 110,668 120,635 135,605 150,590 180,590 195,576 215,590 235,612 255,632 270,634 285,660 308,692 325,672 350,633 365,632 380,620 405,595 425,603 440,615 455,610 470,570 490,530 510,485 530,455 550,444 570,452 590,480 610,495 630,535 645,580 660,620 680,665 690,690 700,690 708,675')
  ]);
  var close = series([
    A.concat('30,690 42,760 57,590 66,580 80,600 92,740 103,760 112,740 125,730 138,820 155,830 165,750 175,790 185,700 192,790 200,775 210,700 218,640 235,680 245,630 258,565 275,580 283,430 290,370 299,365 308,285 325,260 335,255 344,340 355,300 362,330 371,450 380,335 388,360 400,430 410,400 420,400 425,545 440,550 455,630 470,600 480,570 490,670 505,680 525,710 545,700 560,650 570,690 585,705 600,730 604,870 620,890 635,930 655,920 670,945 677,860 685,850 695,780 710,750 730,700 740,730 757,790 768,690 783,640 800,700 812,740 820,680 830,720 838,750 850,710 862,710 870,690 875,735 883,700 892,780 900,745 910,810 918,700 928,660 940,700 945,790 953,820 963,770 975,750 985,760 1000,790 1012,770 1018,745 1025,650 1035,620 1050,600 1060,600 1063,685 1075,685 1090,690 1100,690 1105,775 1125,770 1140,750 1150,745 1160,790 1178,845 1195,820 1205,785 1220,805 1235,780 1250,790 1258,700 1270,710 1275,770 1290,820 1310,840 1320,790 1330,840 1347,870 1365,840 1377,920 1395,900 1410,900 1430,940 1440,970 1447,1020 1455,1190 1465,1170 1475,1200 1485,1215 1495,1190 1515,1190 1527,1230 1536,1190 1545,1240 1560,1235'),
    B.concat('115,1240 125,1210 135,1155 150,1130 155,1060 165,1105 185,1095 197,1020 205,930 213,905 222,885 232,980 240,1055 250,1060 260,1015 270,1010 280,990 290,1020 298,1060 312,1080 325,1075 332,1140 345,1125 360,1140 372,1150 378,1085 390,1000 400,1010 413,1060 425,1020 430,930 440,960 450,1040 465,1100 475,1110 484,1000 495,1000 505,960 520,990 528,910 545,860 555,790 565,795 580,850 592,825 600,870 615,875 635,870 645,920 655,965 670,1015 680,1090 690,1140 705,1160 707,1230 720,1215 740,1240 755,1250 762,1240 770,1310 780,1310 788,1255 805,1315 815,1290 835,1305 842,1365 855,1320 870,1385 878,1350 887,1240 900,1305 913,1290 930,1300 940,1355 955,1340 960,1300 968,1395 978,1330 988,1265 1000,1310 1015,1290 1035,1320 1045,1355 1055,1300 1067,1280 1075,1210 1085,1135 1095,1150 1103,1195 1115,1230 1122,1210 1130,1275 1140,1220 1155,1230 1165,1170 1175,1170 1185,1185 1195,1110 1205,1060 1217,1100 1228,1095 1237,1045 1250,1040 1255,985 1265,920 1272,840 1281,765 1298,760 1302,730 1307,500 1316,530 1325,640 1335,710 1345,680 1352,575 1362,590 1370,670 1380,600 1388,585 1398,570 1405,600 1415,550 1424,570 1433,530 1440,425 1455,430 1462,410 1477,470 1487,390 1496,490 1505,555 1515,570 1523,430 1540,460 1550,510 1560,500'),
    C.concat('230,620 245,640 255,530 265,600 275,545 285,620 295,640 300,575 310,610 320,540 328,530 335,455 345,460 355,520 365,600 375,560 385,570 392,490 405,520 415,510 420,575 430,560 435,520 447,505 455,420 465,295 475,300 490,350 502,360 507,310 517,420 528,420 535,360 546,420 557,370 567,385 575,345 580,450 592,470 608,490 617,590 630,605 643,625 645,670 655,690 665,650 680,655 688,660 690,515 700,510 708,507')
  ]);
  var rsi = series([
    [0, 670, 1.568, 3, '20,425 27,530 34,430 40,300 46,345 52,337 58,400 65,620 71,580 77,628 84,530 90,555 97,683 109,695 115,422 121,538 127,397 134,538 140,490 147,360 153,300 159,378 165,407 172,310 178,252 184,290 190,325 197,175 203,148 209,148 215,115 221,132 227,118 234,250 241,420 247,340 253,430 260,640 265,435 272,500 278,582 284,512 290,540 297,695 303,658 310,680 317,745 323,690 330,600 334,555 341,708 347,663 353,700 360,730 366,715 372,728 378,620 384,525 391,480 398,560 410,660 416,695 422,857 429,820 438,845 447,858 454,798 461,800 466,830 472,430 479,395 485,275 492,235 498,212 504,203 511,153 517,300 523,510 529,543 535,322 542,340 548,255 555,360 566,548 572,387 579,500 585,563 592,444 598,498 604,420 611,535 617,445 623,610 629,518 635,645 642,410 648,355 655,450 661,585 667,620 673,530 680,472 686,485 692,570 699,512 705,567 711,420 717,258 723,235 731,212 737,213 743,498 749,475 755,520 761,537 767,495 773,715 780,703 786,693 793,645 799,655 805,530 811,660 817,745 824,788 830,690 836,560 842,420 849,500 855,517 861,403 868,507 874,430 880,237 887,268 893,520 899,600 905,645 912,665 918,620 924,498 931,630 937,665 943,690 949,610 956,560 962,750 968,670 974,630 981,530 987,615 994,660 1000,735 1006,780 1018,890 1024,818 1037,842 1043,685 1049,715 1056,690 1062,648 1069,725 1075,578 1081,668 1087,648 1094,678 1100,672 1106,480 1113,295 1118,265 1125,170 1131,345 1137,347 1143,320 1150,320 1157,180 1163,125 1169,112 1175,220 1181,420 1187,573 1194,582 1200,460 1206,455 1213,387 1219,500 1225,600 1231,635 1238,663 1244,597 1250,735 1257,663 1263,692 1269,663 1275,710 1281,410 1287,300 1294,235 1300,350 1307,487 1313,420 1320,243 1326,370 1332,510 1338,560 1345,640 1351,650 1357,395 1363,415 1370,328 1376,350 1382,450 1388,300 1394,265 1401,235 1408,175 1413,195 1420,340 1426,415 1432,352 1438,490 1445,512 1457,548 1464,472 1470,650 1476,735 1483,775 1495,852 1508,880 1513,893'],
    [950, 670, 1.568, 3, '31,802 37,813 50,830 56,842 62,810 69,862 74,830 81,540 87,610 93,690 100,552 106,605 112,610 119,740 125,600 131,507 137,675 143,530 150,325 156,478 162,450 168,465 175,485 181,412 187,608 193,597 200,438 206,630 212,490 219,385 225,445 231,472 237,405 244,500 250,503 257,600 263,585 270,385 276,355 282,225 288,168 294,260 300,410 306,493 312,420 320,585 326,468 331,457 338,483 344,333 350,333 357,405 363,300 369,215 376,190 382,380 388,345 395,262 401,258 407,180 413,130 419,103 426,85 432,103 438,88 444,60 450,170 457,400 463,460 470,400 476,310 482,320 489,490 495,385 501,370 507,348 513,445 519,343 526,415 532,350 538,235 545,278 551,242 557,330 563,445 570,303 576,510 583,603 589,618 595,387 607,460 614,548 620,497 626,680 632,692 639,560 645,430 651,560 657,492 664,555 670,618 676,463 682,537 689,395 695,403 701,290 707,315 714,450 720,590 726,520 732,537 739,367 745,440 752,400 758,560 764,495 770,445 776,410 783,250 790,165 796,190 802,280 808,360 814,392 821,297 827,570 833,555 839,430 845,557 852,460 858,455 864,402 871,610 877,640 883,650 889,680 896,790 902,802 908,815 914,840 921,855 927,645 933,660 940,683 946,305 952,300 958,290']
  ]);

  var s = document.getElementById('daily');
  function line(svg, x1, y1, x2, y2, c, w, dash) {
    el(svg, 'line', { x1: x1, y1: y1, x2: x2, y2: y2, stroke: c, 'stroke-width': w || 1, 'stroke-dasharray': dash || 'none' });
  }
  el(s, 'rect', { x: 333, y: 332, width: 1216, height: 17, fill: '#4b0082' });
  line(s, 13, 273.5, 1878, 273.5, '#778899', 1);
  [[16, 531, 1813, 83], [605, 442, 1878, 125], [17, 624, 1878, 161], [927, 398, 1878, 162], [17, 662, 1878, 198], [665, 571, 1878, 270]].forEach(function (l) {
    line(s, l[0], l[1], l[2], l[3], '#1e90ff', 1.2, '3 3');
  });
  var mid = [];
  for (var m = 14; m < 1562; m += 4) mid.push([m, (at(upper, m) + at(lower, m)) / 2]);
  el(s, 'path', { d: d(mid), fill: 'none', stroke: '#0000ff', 'stroke-dasharray': '9 5' });
  [upper, lower].forEach(function (b) { el(s, 'path', { d: d(b), fill: 'none', stroke: '#ff4500', 'stroke-width': 2, 'stroke-linejoin': 'round' }); });

  function fib(x1, x2, color, cls, rows) {
    rows.forEach(function (r) {
      line(s, x1, r[0], x2, r[0], color, 1);
      el(s, 'text', { x: x2, y: r[0] - 2.5, 'text-anchor': 'end', 'class': cls }, r[1]);
    });
  }
  el(s, 'rect', { x: 1064, y: 341, width: 53, height: 11, fill: '#000' });
  fib(997, 1116, '#4169e1', 'fibb', [[240.5, '423.6 1265.02'], [296.5, '361.8 1233.14'], [352.5, '300 1201.26'], [386.5, '261.8 1181.55'], [442.5, '200 - 1149.66'], [476.5, '161.8 -  1129.96'], [498.5, '138.2 - 1117.78'], [508.5, '127.2 - 1112.10'], [532.5, '100.0 1098.07'], [543.5, '88.6 1092.19'], [552.5, '78.6 - 1087.03'], [567.5, '61.8 - 1078.36'], [577.5, '50.0 1072.28'], [588.5, '38.2 1066.19'], [601.5, '23.6 1058.66'], [623.5, '0 1046.48']]);
  fib(1509, 1668, '#9400d3', 'fibp', [[138.5, '200 - 1323.13'], [180.5, '161.8 -  1299.44'], [205.5, '138.2 - 1284.80'], [217.5, '127.2 - 1277.97'], [247.5, '100.0 1261.10'], [259.5, '88.6 1254.03'], [270.5, '78.6 - 1247.83'], [288.5, '61.8 - 1237.40'], [301.5, '50.0 1230.08'], [314.5, '38.2 1222.76'], [330.5, '23.6 1213.71'], [355.5, '0 1199.07']]);

  var wick = '', up = '', down = '', prev = at(close, 14);
  for (var x = 14; x <= 1566; x += 4) {
    var c = at(close, x) + (rnd() - 0.5) * 9;
    var top = Math.round(Math.min(prev, c)), h = Math.max(1, Math.round(Math.abs(c - prev)));
    var a = rnd() * 10, b = rnd() * 10;
    wick += 'M' + (x + 0.5) + ' ' + (top - a).toFixed(1) + 'V' + (top + h + b).toFixed(1);
    var box = 'M' + (x - 0.5) + ' ' + (top + 0.5) + 'h2v' + h + 'h-2z';
    if (c < prev) up += box; else down += box;
    prev = c;
  }
  wick += 'M649.500 500V579M665.500 540V572M145.500 165V220M1233.500 243V300M1317.500 206V260M1457.500 172V200M1537.500 335V356M1041.500 600V624M89.500 380V412';
  el(s, 'path', { d: wick, stroke: '#00ff00', fill: 'none' });
  el(s, 'path', { d: up, stroke: '#00ff00', fill: '#000' });
  el(s, 'path', { d: down, stroke: '#00ff00', fill: '#fff' });

  function arrow(x1, y1, x2, y2) {
    line(s, x1, y1, x2, y2, '#ff00ff', 3);
    var t = Math.atan2(y2 - y1, x2 - x1), ux = Math.cos(t), uy = Math.sin(t);
    var bx = x2 - ux * 15, by = y2 - uy * 15;
    el(s, 'polygon', { points: [x2 + ux * 2, y2 + uy * 2, bx - uy * 5, by + ux * 5, bx + uy * 5, by - ux * 5].join(' '), fill: '#ff00ff' });
  }
  arrow(1568, 259, 1587, 333); arrow(1587, 333, 1615, 126); arrow(1615, 126, 1690, 541);

  // RSI pane
  line(s, 13, 884.5, 1878, 884.5, '#a000a0', 1, '3 3');
  el(s, 'path', { d: d(rsi), fill: 'none', stroke: '#ffff00', 'stroke-width': 2.5, 'stroke-linejoin': 'round' });
  line(s, 1237, 690, 1653, 756, '#00bfff', 1.3);
  line(s, 1357, 903, 1592, 738, '#00bfff', 1);
  arrow(1562, 761, 1586, 871); arrow(1586, 871, 1599, 753); arrow(1599, 753, 1667, 945);

  // frames and axes
  el(s, 'path', { d: 'M13.500 679.500V82.500H1878.500V679.500H13.500M13.500 979.500V681.500H1878.500V979.500H13.500', stroke: '#fff', fill: 'none' });
  line(s, 1878, 358, 1878, 507, '#ff4500', 4);
  el(s, 'path', { d: 'M1499 83h9l-4.500 5zM13 974l6 5h-6z', fill: '#778899' });
  ['1336.33', '1317.63', '1298.38', '1279.68', '1260.98', '1242.28', '1223.03', '1204.33', '1185.63', '1166.93', '1147.68', '1128.98', '1110.28', '1091.58', '1072.33', '1053.63', '1034.93', '1016.23'].forEach(function (t, i) {
    var y = 115.5 + i * 33;
    line(s, 1878, y, 1881, y, '#fff');
    el(s, 'text', { x: 1884, y: y + 3.5 }, t);
  });
  el(s, 'rect', { x: 1880, y: 268, width: 40, height: 11, fill: '#fff' });
  el(s, 'text', { x: 1884, y: 277, 'class': 'inv' }, '1246.15');
  el(s, 'text', { x: 1882, y: 692 }, '100');
  el(s, 'text', { x: 1882, y: 888 }, '32');
  el(s, 'text', { x: 1882, y: 976 }, '0');
  ['4 Dec 2014', '29 Dec 2014', '21 Jan 2015', '12 Feb 2015', '6 Mar 2015', '30 Mar 2015', '22 Apr 2015', '14 May 2015', '5 Jun 2015', '29 Jun 2015', '21 Jul 2015', '12 Aug 2015', '3 Sep 2015', '25 Sep 2015', '19 Oct 2015', '10 Nov 2015', '2 Dec 2015', '24 Dec 2015', '19 Jan 2016', '10 Feb 2016', '3 Mar 2016', '28 Mar 2016', '19 Apr 2016', '11 May 2016', '2 Jun 2016'].forEach(function (t, i) {
    line(s, 13.5 + i * 64, 979, 13.5 + i * 64, 983, '#fff');
    el(s, 'text', { x: 12 + i * 64, y: 992 }, t);
  });
  el(s, 'path', { d: 'M16 87h7l-3.500 4z', fill: '#fff' });
  el(s, 'text', { x: 27, y: 94 }, 'XAUUSD,Daily\u00a0 1245.10 1246.35 1243.05 1246.15');
  el(s, 'text', { x: 17, y: 694 }, 'RSI(5) 71.3924');
  el(s, 'text', { x: 1599, y: 965, 'class': 'wm l' }, 'Activate Windows');
  el(s, 'text', { x: 1599, y: 985, 'class': 'wm' }, 'Go to Settings to activate Windows.');

  // one-minute chart
  var q = document.getElementById('minute');
  var K = [1920, 0, 1.531, 3];
  var zig = series([K.concat('8,250 165,292 180,265 290,296 440,268 535,288 570,267 735,284 760,268 785,282 820,250 890,306 935,260 995,340 1140,245 1170,235')]);
  var px = series([K.concat('8,250 30,255 55,262 90,265 115,272 120,285 140,278 165,285 175,268 190,270 220,275 235,290 285,293 320,288 350,280 400,270 440,267 480,272 530,283 570,268 585,278 640,278 690,278 740,283 760,270 790,280 800,268 815,250 825,260 840,290 880,292 890,305 900,290 935,262 950,285 985,288 995,303 1000,295 1050,290 1070,265 1120,270 1130,265 1140,248 1160,243 1185,242')]);
  el(q, 'path', { d: d(zig), fill: 'none', stroke: '#4b0082' });
  line(q, 1924, 80.5, 2894, 80.5, '#778899');
  var last = at(px, 1926);
  for (var i = 1926; i <= 2694; i += 4) {
    var v = at(px, i) + (rnd() - 0.5) * 1.5, col = v < last ? '#ffff00' : '#ff0000';
    var t0 = Math.min(v, last);
    line(q, i + 0.5, t0 - rnd() * 2, i + 0.5, Math.max(v, last) + rnd() * 2, col);
    el(q, 'rect', { x: i - 1, y: t0.toFixed(1), width: 3, height: Math.max(1.5, Math.abs(v - last)).toFixed(1), fill: col });
    last = v;
  }
  line(q, 2570.5, 96, 2570.5, 114, '#ffff00');
  el(q, 'path', { d: 'M1924.500 115.500V74.500H2894.500V115.500H1924.500M1924.500 119.500H2894.500V129.500H1924.500zM1924.500 131.500H2894.500V135.500H1924.500z', fill: 'none', stroke: '#fff' });
  line(q, 1924, 117, 2895, 117, '#fff', 2);
  el(q, 'path', { d: 'M2693 75h10l-5 5z', fill: '#778899' });
  el(q, 'path', { d: 'M1928 81h7l-3.500 4z', fill: '#fff' });
  el(q, 'text', { x: 1939, y: 86 }, 'XAUUSDm,M1');
  el(q, 'rect', { x: 2896, y: 75, width: 45, height: 11, fill: '#fff' });
  el(q, 'text', { x: 2900, y: 84, 'class': 'inv' }, '1246.125');
  el(q, 'text', { x: 2900, y: 115 }, '1243.275');
  ['6 Jun 2016', '6 Jun 20:49', '6 Jun 22:05', '6 Jun 22:21', '6 Jun 22:37', '6 Jun 22:53', '6 Jun 23:09', '6 Jun 23:25', '6 Jun 23:41', '6 Jun 23:57', '7 Jun 00:13', '7 Jun 00:29', '7 Jun 00:45'].forEach(function (t, n) {
    line(q, 1925.5 + n * 64, 136, 1925.5 + n * 64, 139, '#fff');
    el(q, 'text', { x: 1924 + n * 64, y: 148 }, t);
  });

  // open orders: id, time, side, size, open price, take profit, swap, profit
  var orders = [
    ['5608311', '2015.01.25 23:53:19', 'buy', '0.05', '1297.462', '1317.000', '-40.69', '-256.68'],
    ['21540330', '2015.12.03 02:18:42', 'sell', '0.10', '1050.020', '0.000', '12.65', '-1 966.55'],
    ['21550650', '2015.12.03 05:45:44', 'sell', '0.10', '1054.327', '0.000', '12.65', '-1 923.48'],
    ['23550051', '2016.01.05 04:15:40', 'sell', '0.10', '1076.657', '0.000', '12.07', '-1 700.18'],
    ['24539743', '2016.01.15 02:37:09', 'sell', '0.10', '1079.528', '0.000', '11.85', '-1 671.47'],
    ['33113874', '2016.05.03 23:13:02', 'buy', '0.20', '1286.789', '1305.000', '-16.27', '-813.28'],
    ['33241044', '2016.05.05 13:08:26', 'buy', '0.20', '1286.695', '1305.000', '-14.84', '-811.40'],
    ['33334105', '2016.05.06 18:29:21', 'buy', '0.20', '1288.604', '0.000', '-14.36', '-849.58'],
    ['33334108', '2016.05.06 18:29:26', 'buy', '0.20', '1288.605', '0.000', '-14.36', '-849.60'],
    ['34058064', '2016.05.17 05:31:01', 'buy', '0.20', '1278.798', '0.000', '-10.05', '-653.46'],
    ['34174414', '2016.05.18 03:42:29', 'buy', '0.20', '1275.651', '0.000', '-9.57', '-590.52'],
    ['34247927', '2016.05.18 14:11:53', 'buy', '0.20', '1270.526', '0.000', '-9.57', '-488.02'],
    ['34832805', '2016.05.27 18:36:49', 'sell', '0.20', '1207.599', '0.000', '1.80', '-781.52'],
    ['34869460', '2016.05.30 09:22:30', 'sell', '0.20', '1205.547', '0.000', '1.60', '-822.56'],
    ['34888675', '2016.05.30 17:26:44', 'sell', '0.20', '1205.065', '0.000', '1.60', '-832.20'],
    ['35193920', '2016.06.03 11:17:43', 'sell', '0.20', '1212.130', '0.000', '0.40', '-690.90'],
    ['35227297', '2016.06.03 15:43:21', 'sell', '0.20', '1238.484', '1232.000', '0.40', '-163.82']
  ];
  document.getElementById('orders').innerHTML = orders.map(function (o) {
    var buy = o[2] === 'buy';
    var icon = '<svg viewBox="0 0 14 16"><path d="M1.500 1.500h6l4 4v8h-10z" fill="#fff" stroke="#555"/><circle cx="10" cy="12" r="3.500" fill="' + (buy ? '#1e90e8' : '#e84a10') + '"/></svg>';
    var cells = [icon + o[0], o[1], o[2], o[3], 'xauusdm', o[4], '0.000', o[5], buy ? '1246.125' : '1246.675', '0.00', o[6], o[7] + '<button aria-label="Close order ' + o[0] + '">×</button>', ''];
    return '<tr><td>' + cells.join('</td><td>') + '</td></tr>';
  }).join('');
})();
```
